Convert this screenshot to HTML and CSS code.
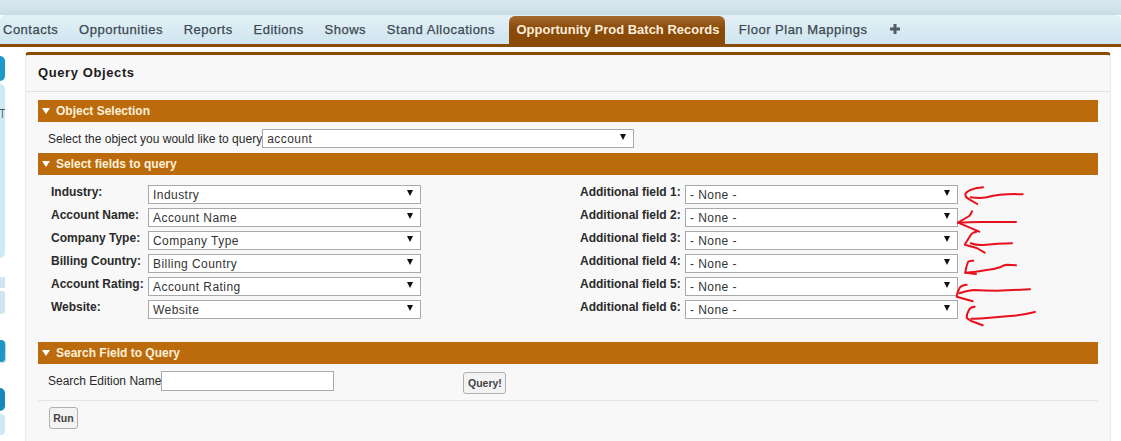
FILE: index.html
```html
<!DOCTYPE html>
<html lang="en">
<head>
<meta charset="utf-8">
<title>Query Objects</title>
<link rel="stylesheet" href="styles.css">
</head>
<body>
<div class="page">
  <div class="topband"></div>
  <nav class="tabs">
    <a class="tab first">Contacts</a>
    <a class="tab">Opportunities</a>
    <a class="tab">Reports</a>
    <a class="tab">Editions</a>
    <a class="tab">Shows</a>
    <a class="tab">Stand Allocations</a>
    <a class="tab active">Opportunity Prod Batch Records</a>
    <a class="tab">Floor Plan Mappings</a>
    <a class="tab plus">
      <svg width="10" height="10" viewBox="0 0 10 10"><path d="M3.5 0h3v3.5H10v3H6.5V10h-3V6.5H0v-3h3.5z" fill="#555b60"/></svg>
    </a>
  </nav>
  <div class="main">
    <aside class="side">
      <div class="sb sb-head"></div>
      <div class="sb sb-list"><span class="sb-t">T</span></div>
      <div class="sb sb-a"></div>
      <div class="sb sb-b"></div>
      <div class="sb sb-btn"></div>
      <div class="sb sb-head2"></div>
      <div class="sb sb-c"></div>
    </aside>
    <section class="panel">
      <h1 class="title">Query Objects</h1>

      <h2 class="bar"><i class="tri"></i>Object Selection</h2>
      <div class="objrow">
        <label class="objlabel">Select the object you would like to query</label>
        <span class="sel sel-obj"><select><option>account</option></select></span>
      </div>

      <h2 class="bar"><i class="tri"></i>Select fields to query</h2>
      <div class="fields">
        <div class="field"><label>Industry:</label><span class="sel"><select><option>Industry</option></select></span></div>
        <div class="field"><label>Additional field 1:</label><span class="sel"><select><option>- None -</option></select></span></div>
        <div class="field"><label>Account Name:</label><span class="sel"><select><option>Account Name</option></select></span></div>
        <div class="field"><label>Additional field 2:</label><span class="sel"><select><option>- None -</option></select></span></div>
        <div class="field"><label>Company Type:</label><span class="sel"><select><option>Company Type</option></select></span></div>
        <div class="field"><label>Additional field 3:</label><span class="sel"><select><option>- None -</option></select></span></div>
        <div class="field"><label>Billing Country:</label><span class="sel"><select><option>Billing Country</option></select></span></div>
        <div class="field"><label>Additional field 4:</label><span class="sel"><select><option>- None -</option></select></span></div>
        <div class="field"><label>Account Rating:</label><span class="sel"><select><option>Account Rating</option></select></span></div>
        <div class="field"><label>Additional field 5:</label><span class="sel"><select><option>- None -</option></select></span></div>
        <div class="field"><label>Website:</label><span class="sel"><select><option>Website</option></select></span></div>
        <div class="field"><label>Additional field 6:</label><span class="sel"><select><option>- None -</option></select></span></div>
      </div>

      <h2 class="bar"><i class="tri"></i>Search Field to Query</h2>
      <div class="search">
        <label class="objlabel">Search Edition Name</label>
        <input class="txt" type="text">
        <button class="btn btn-query" type="button">Query!</button>
      </div>
      <div class="actions">
        <button class="btn" type="button">Run</button>
      </div>
    </section>
  </div>
  <svg class="marks" width="1121" height="441" viewBox="0 0 1121 441" fill="none" stroke="#e8101c" stroke-width="2" stroke-linecap="round" stroke-linejoin="round">
    <path d="M983 187.3Q976 188 972.7 189.3Q967 191 965.3 194Q965 197 969.3 199.3L977.3 204"/>
    <path d="M970.7 197.3Q980 198.5 986.7 197.3Q993 195.5 1000 194.7Q1011 193.8 1022.7 194.3"/>
    <path d="M972 211.3Q971 214 969.3 216L958 222.7L979.3 231.7"/>
    <path d="M958 222.7Q970 222 980 222L1016 222"/>
    <path d="M976.7 231.7Q972 232.5 970.7 235L964.7 244.7L976.7 248L984.7 252.7"/>
    <path d="M970.7 243.3Q977 245.5 983.3 245Q998 243.5 1012 243.3"/>
    <path d="M973.3 260.7Q969 260.5 968 262Q966 267 965.3 272.7L976 274"/>
    <path d="M965.3 272.7Q976 272 986.7 270Q994 269.5 1000 267.3Q1004 265 1006.7 264.7L1016 265.3"/>
    <path d="M966.7 284.7Q962 285 960 287.3Q957 292 956.7 296.7L972.7 301.3"/>
    <path d="M959.3 293.3Q966 291 973.3 290Q985 290.5 996.7 290.7L1030 289.3"/>
    <path d="M974.7 306.7Q970.5 307 969.3 309.3Q966.5 314 966.7 318Q970 321 976 322.7L982.7 325.3"/>
    <path d="M971.3 318.7Q978 319 986.7 318L1010 316Q1023 315 1035 312"/>
  </svg>
</div>
</body>
</html>
```

FILE: styles.css
```css
* { box-sizing: border-box; }
html, body { margin: 0; padding: 0; background: #fff; }
body { font-family: "Liberation Sans", Arial, sans-serif; color: #222; }
.page { position: relative; width: 1121px; height: 441px; overflow: hidden; }

.topband { height: 15px; background: linear-gradient(#d9e8ee, #c9dde6); }

.tabs {
  display: flex;
  height: 32px;
  padding-top: 1px;
  background: linear-gradient(#e3f0f6, #cfe5f0);
  border-bottom: 3px solid #8a4a08;
  border-radius: 5px 5px 0 0;
}
.tab {
  display: flex;
  align-items: center;
  height: 28px;
  padding: 0 10.4px 2px;
  font-size: 13px;
  font-weight: 400;
  color: #3b4850;
  -webkit-text-stroke: 0.25px #3b4850;
  letter-spacing: 0.5px;
  white-space: nowrap;
}
.tab.first { padding-left: 3px; }
.tab.active {
  margin: 0 3px 0 4px;
  padding: 0 6px 2px 7px;
  color: #fbeedd;
  font-weight: 700;
  -webkit-text-stroke: 0;
  letter-spacing: 0;
  background: linear-gradient(#a5692e, #8a4a08 45%);
  border-radius: 6px 6px 0 0;
}
.tab.plus { padding: 0 0 2px 12px; }

.main { display: flex; padding-top: 5px; height: 394px; }

.side { flex: 0 0 5px; display: flex; flex-direction: column; }
.sb { width: 5px; }
.sb-head { height: 25px; margin-top: 4px; background: #1c9ac9; border-radius: 0 5px 5px 0; }
.sb-list { position: relative; height: 174px; margin-top: 3px; background: #cdeaf7; border-radius: 0 5px 5px 0; }
.sb-t { position: absolute; left: 0; top: 23px; font-size: 12px; color: #444; transform: scaleX(.65); transform-origin: left center; }
.sb-a { height: 11px; margin-top: 19px; background: #cfe6f0; }
.sb-b { height: 23px; margin-top: 3px; background: #cfe6f0; border-radius: 0 3px 3px 0; }
.sb-btn { height: 22px; margin-top: 26px; background: #1c98c8; border-radius: 0 4px 4px 0; box-shadow: 1px 1px 1px #ccc; }
.sb-head2 { height: 23px; margin-top: 26px; background: #1589bb; border-radius: 0 5px 5px 0; }
.sb-c { height: 21px; margin-top: 3px; background: #cfe8f3; border-radius: 0 4px 4px 0; }

.panel {
  width: 1086px;
  height: 400px;
  margin-left: 20px;
  padding: 0 12px;
  background: #f8f8f8;
  border-top: 3px solid #8a4a08;
  border-left: 1px solid #ececec;
  border-right: 1px solid #ececec;
  border-radius: 4px 4px 0 0;
}
.title {
  margin: 0 -12px 8px;
  padding: 0 12px;
  height: 37px;
  line-height: 36px;
  font-size: 13px;
  font-weight: 700;
  letter-spacing: 0.6px;
  color: #1c1c1c;
  border-bottom: 1px solid #e2e2e2;
}
.bar {
  display: flex;
  align-items: center;
  height: 22px;
  margin: 0;
  padding-left: 4px;
  font-size: 12px;
  font-weight: 700;
  color: #fdf1dc;
  background: #bb6b0c;
}
.tri {
  width: 0;
  height: 0;
  margin-right: 6px;
  border-left: 4px solid transparent;
  border-right: 4px solid transparent;
  border-top: 6px solid #fff;
}

.objrow { display: flex; align-items: center; height: 31px; padding: 3px 0 1px 10px; }
.objlabel { flex: 0 0 214px; font-size: 12px; color: #2a2a2a; white-space: nowrap; }

.sel { position: relative; display: block; width: 273px; height: 19px; flex: none; }
.sel-obj { width: 372px; }
.sel select {
  display: block;
  width: 100%;
  height: 100%;
  padding: 0 20px 0 4px;
  font: 12px "Liberation Sans", Arial, sans-serif;
  letter-spacing: 0.45px;
  color: #333;
  background: #fff;
  border: 1px solid #a9a9a9;
  border-radius: 0;
  appearance: none;
  -webkit-appearance: none;
}
.sel::after {
  content: "";
  position: absolute;
  right: 8px;
  top: 5px;
  border-left: 3px solid transparent;
  border-right: 3px solid transparent;
  border-top: 6px solid #111;
}

.fields {
  display: grid;
  grid-template-columns: 529px 1fr;
  grid-auto-rows: 23px;
  padding: 10px 0 0 13px;
  height: 167px;
}
.field { display: flex; }
.field label {
  flex: 0 0 97px;
  font-size: 12px;
  font-weight: 700;
  color: #2a2a2a;
  white-space: nowrap;
}
.field:nth-child(even) label { flex-basis: 105px; }

.search {
  display: flex;
  align-items: flex-start;
  height: 37px;
  padding: 7px 0 0 10px;
  border-bottom: 1px solid #e6e6e6;
}
.search .objlabel { flex: 0 0 113px; line-height: 20px; }
.txt { width: 173px; height: 20px; padding: 0 4px; background: #fff; border: 1px solid #a9a9a9; }
.btn {
  height: 22px;
  padding: 0;
  font: 700 10.5px "Liberation Sans", Arial, sans-serif;
  color: #444;
  background: #f3f3f3;
  border: 1px solid #b0b0b0;
  border-radius: 3px;
}
.btn-query { width: 43px; margin: 1px 0 0 129px; }
.actions { padding: 6px 0 0 11px; }
.actions .btn { width: 29px; }

.marks { position: absolute; left: 0; top: 0; pointer-events: none; }
```
